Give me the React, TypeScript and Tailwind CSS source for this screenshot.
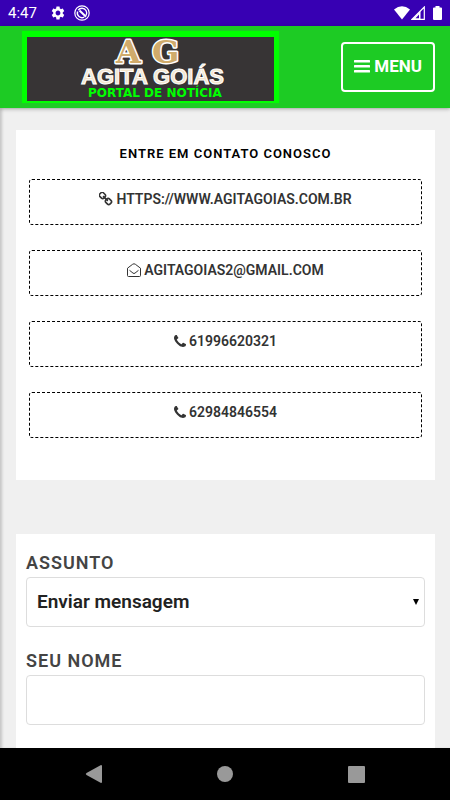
import React from "react";
import { MdSettings } from "react-icons/md";

function LinkIcon() {
  return (
    <svg className="size-3.5 shrink-0" viewBox="80 80 1632 1632" fill="currentColor" aria-hidden="true">
      <path d="M1456 1216q0-40-28-68l-208-208q-28-28-68-28-42 0-72 32 3 3 19 18.500t21.500 21.500 15 19 13 25.500 3.500 27.500q0 40-28 68t-68 28q-15 0-27.500-3.500t-25.500-13-19-15-21.500-21.500-18.500-19q-33 31-33 73 0 40 28 68l206 207q27 27 68 27 40 0 68-26l147-146q28-28 28-67zm-703-705q0-40-28-68l-206-207q-28-28-68-28-39 0-68 27l-147 146q-28 28-28 67 0 40 28 68l208 208q27 27 68 27 42 0 72-31-3-3-19-18.500t-21.500-21.500-15-19-13-25.500-3.500-27.500q0-40 28-68t68-28q15 0 27.500 3.500t25.500 13 19 15 21.500 21.500 18.500 19q33-31 33-73zm895 705q0 120-85 203l-147 146q-83 83-203 83-121 0-204-85l-206-207q-83-83-83-203 0-123 88-209l-88-88q-86 88-208 88-120 0-204-84l-208-208q-84-84-84-204t85-203l147-146q83-83 203-83 121 0 204 85l206 207q83 83 83 203 0 123-88 209l88 88q86-88 208-88 120 0 204 84l208 208q84 84 84 204z" />
    </svg>
  );
}

function EnvelopeIcon() {
  return (
    <svg className="size-3.5 shrink-0" viewBox="0 0 14 14" fill="none" stroke="currentColor" aria-hidden="true">
      <path d="M.5 5.200 5.600 1.300Q7 .2 8.400 1.300L13.500 5.200V12.500Q13.500 13.500 12.500 13.500H1.500Q.5 13.500.5 12.500Z" />
      <path d="m2.500 7.300 3.500 2.800q1 .8 2 0l3.500-2.800" />
    </svg>
  );
}

function PhoneIcon() {
  return (
    <svg className="size-3 shrink-0" viewBox="0 0 1408 1408" fill="currentColor" aria-hidden="true">
      <path d="M1408 1112q0 27-10 70.500t-21 68.500q-21 50-122 106-94 51-186 51-27 0-53-3.500t-57-12.500-47-14.500-55.500-20.500-49-18q-98-35-175-83-127-79-264-216t-216-264q-48-77-83-175-3-9-18-49t-20.500-55.500-14.500-47-12.500-57-3.500-53q0-92 51-186 56-101 106-122 25-11 68.500-21t70.500-10q14 0 21 3 18 6 53 76 11 19 30 54t35 63.500 31 53.500q3 4 17.500 25t21.500 35.500 7 28.500q0 20-28.500 50t-62 55-62 53-28.500 46q0 9 5 22.500t8.500 20.500 14 24 11.500 19q76 137 174 235t235 174q2 1 19 11.500t24 14 20.500 8.500 22.500 5q18 0 46-28.500t53-62 55-62 50-28.500q14 0 28.500 7t35.500 21.500 25 17.500q25 15 53.500 31t63.500 35 54 30q70 35 76 53 3 7 3 21z" />
    </svg>
  );
}

function StatusBar() {
  return (
    <div className="flex h-[26px] shrink-0 items-center justify-between bg-[#3700b3] px-2 text-white">
      <div className="flex items-center">
        <span className="w-[42px] text-[15px] leading-5">4:47</span>
        <MdSettings className="size-4" />
        <svg className="ml-2 size-4" viewBox="0 0 16 16" fill="none" stroke="currentColor" aria-hidden="true">
          <circle cx="8" cy="8" r="7.200" strokeWidth="1.200" />
          <path d="M12 10.500A4.700 4.700 0 0 0 8 3.300Q5.500 3.300 4.200 5.200" strokeWidth="1.400" />
          <path d="M3.600 6.500A4.700 4.700 0 0 0 10.200 12.200" strokeWidth="1.400" />
          <path d="m5.500 5.500 6.500 6.300" strokeWidth="2" />
        </svg>
      </div>
      <div className="flex items-center">
        <svg className="h-3.5 w-4" viewBox="0 0 16 14" fill="currentColor" aria-hidden="true">
          <path d="M0 3.500Q8-3.200 16 3.500L8 13.500Z" />
        </svg>
        <svg className="ml-px h-3.5 w-3.5" viewBox="0 0 14 14" aria-hidden="true">
          <path d="M13.300 1V13.300H1Z" fill="none" stroke="currentColor" strokeWidth="1.200" />
          <path d="M1 13.500 9.500 5V13.500Z" fill="currentColor" />
          <path d="M4.500 12.300 8 8.600V12.300Z" fill="#3700b3" />
        </svg>
        <svg className="ml-2 h-3.5 w-[9px]" viewBox="0 0 9 14" fill="currentColor" aria-hidden="true">
          <path d="M2.500 0h4v1.500H8a1 1 0 0 1 1 1V13a1 1 0 0 1-1 1H1a1 1 0 0 1-1-1V2.500a1 1 0 0 1 1-1h1.500Z" />
        </svg>
      </div>
    </div>
  );
}

function Logo() {
  return (
    <svg className="h-[72px] w-[257px]" viewBox="0 0 257 72" role="img" aria-label="Agita Goiás">
      <rect width="257" height="72" fill="#00ff00" />
      <rect x="5" y="6" width="247" height="64" fill="#373435" />
      <g
        fontFamily="'DejaVu Serif', serif"
        fontWeight="700"
        fontSize="32"
        fill="#d0ab6b"
        stroke="#ffffff"
        strokeWidth="3"
        strokeLinejoin="round"
        paintOrder="stroke"
      >
        <text x="94" y="32">A</text>
        <text x="130" y="32">G</text>
      </g>
      <text
        x="59"
        y="53"
        fontFamily="'Liberation Sans', Arial, sans-serif"
        fontWeight="700"
        fontSize="22"
        fill="#f3e6cf"
        stroke="#ffffff"
        strokeWidth="1"
      >
        AGITA GOIÁS
      </text>
      <text
        x="66"
        y="66"
        fontFamily="'DejaVu Sans', sans-serif"
        fontWeight="700"
        fontSize="12"
        fill="#00ff00"
      >
        PORTAL DE NOTÍCIA
      </text>
    </svg>
  );
}

const contacts = [
  { icon: <LinkIcon />, text: "HTTPS://WWW.AGITAGOIAS.COM.BR", href: "#site" },
  { icon: <EnvelopeIcon />, text: "AGITAGOIAS2@GMAIL.COM", href: "mailto:agitagoias2@gmail.com" },
  { icon: <PhoneIcon />, text: "61996620321", href: "tel:61996620321" },
  { icon: <PhoneIcon />, text: "62984846554", href: "tel:62984846554" },
];

export default function App() {
  return (
    <div className="flex h-screen flex-col overflow-hidden bg-[#f0f0f0] font-[Roboto,sans-serif]">
      <StatusBar />
      <header className="z-10 flex h-[82px] shrink-0 items-center justify-between bg-[#1dcb24] pr-[15px] pl-[22px] shadow-[0_1px_4px_rgba(0,0,0,0.3)]">
        <a href="#inicio">
          <Logo />
        </a>
        <button
          type="button"
          className="flex h-[50px] items-center gap-1 rounded border-2 border-white px-[11px] pb-0.5 text-[17px] leading-6 font-bold text-white"
        >
          <svg className="h-3.5 w-4" viewBox="0 0 16 14" fill="currentColor" aria-hidden="true">
            <rect y="1" width="16" height="2.500" rx=".5" />
            <rect y="6" width="16" height="2.500" rx=".5" />
            <rect y="11" width="16" height="2.500" rx=".5" />
          </svg>
          MENU
        </button>
      </header>

      <main className="flex min-h-0 flex-1 flex-col gap-[54px] overflow-hidden pt-[22px] pr-[15px] pl-4 shadow-[inset_3px_0_3px_-1px_rgba(0,0,0,0.18)]">
        <section className="shrink-0 bg-white px-[13px] pt-3.5 pb-[42px]">
          <h1 className="text-center text-[13px] leading-5 font-semibold tracking-[1px] text-black">
            ENTRE EM CONTATO CONOSCO
          </h1>
          <ul className="mt-[15px] flex flex-col gap-[25px]">
            {contacts.map((c) => (
              <li key={c.text}>
                <a
                  href={c.href}
                  className="flex h-[46px] items-start justify-center gap-[3px] rounded-[3px] border border-dashed border-black pt-[9px] text-sm leading-5 font-semibold text-[#333333]"
                >
                  <span className="flex h-5 items-center">{c.icon}</span>
                  {c.text}
                </a>
              </li>
            ))}
          </ul>
        </section>

        <form className="flex flex-1 shrink-0 flex-col gap-[22px] bg-white px-2.5 pt-[17px]">
          <div>
            <label htmlFor="assunto" className="block text-lg leading-6 font-semibold tracking-[1px] text-[#444444]">
              ASSUNTO
            </label>
            <div className="relative mt-0.5">
              <select
                id="assunto"
                className="h-[50px] w-full appearance-none rounded border border-[#dddddd] bg-white px-2.5 text-[19px] font-semibold text-[#222222]"
              >
                <option>Enviar mensagem</option>
              </select>
              <svg
                className="pointer-events-none absolute top-1/2 right-1.5 size-1.5 -translate-y-1/2"
                viewBox="0 0 6 6"
                aria-hidden="true"
              >
                <path d="M0 0h6L3 6Z" />
              </svg>
            </div>
          </div>
          <div>
            <label htmlFor="nome" className="block text-lg leading-6 font-semibold tracking-[1px] text-[#444444]">
              SEU NOME
            </label>
            <input
              id="nome"
              type="text"
              className="mt-0.5 block h-[50px] w-full rounded border border-[#dddddd] bg-white px-2.5 text-[19px] text-[#222222]"
            />
          </div>
        </form>
      </main>

      <nav className="flex h-[52px] shrink-0 items-center justify-around bg-black px-7 text-[#999999]">
        <button type="button" aria-label="Voltar">
          <svg className="size-[18px]" viewBox="0 0 18 18" fill="currentColor" aria-hidden="true">
            <path d="M16 0Q17 0 17 1V17Q17 18 16 18L1.500 10Q0 9 1.500 8Z" />
          </svg>
        </button>
        <button type="button" aria-label="Início">
          <svg className="size-4" viewBox="0 0 16 16" fill="currentColor" aria-hidden="true">
            <circle cx="8" cy="8" r="8" />
          </svg>
        </button>
        <button type="button" aria-label="Recentes">
          <svg className="size-[17px]" viewBox="0 0 17 17" fill="currentColor" aria-hidden="true">
            <rect width="17" height="17" rx="1" />
          </svg>
        </button>
      </nav>
    </div>
  );
}
